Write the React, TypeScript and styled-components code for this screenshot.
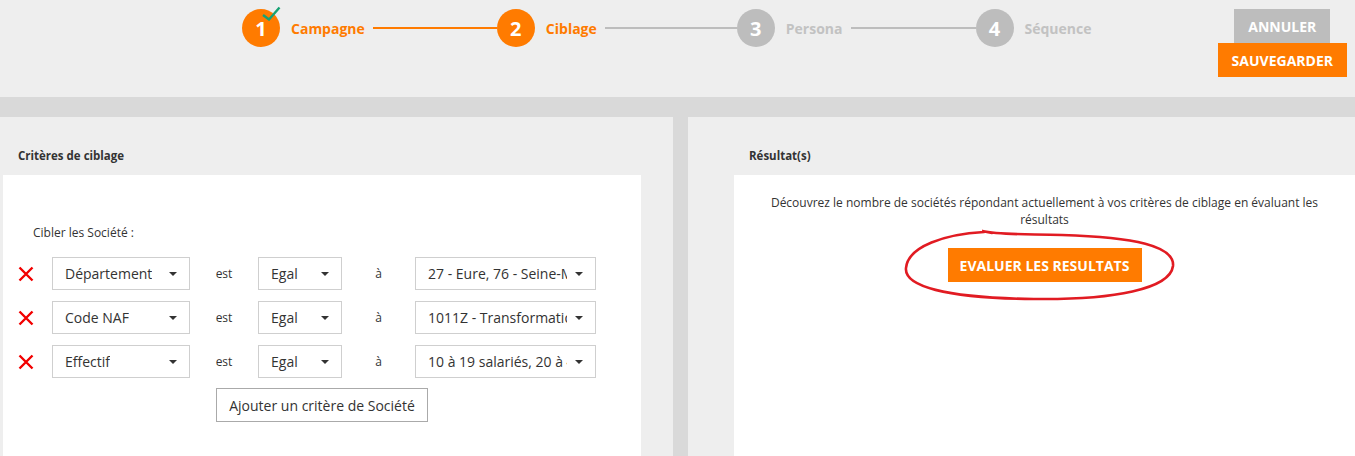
import React from 'react'
import styled, { createGlobalStyle } from 'styled-components'

const ORANGE = '#ff7b00'
const GREY = '#bdbdbd'

const GlobalStyle = createGlobalStyle`
  html, body {
    margin: 0;
    padding: 0;
    background: #eeeeee;
    font-family: "Open Sans", "Liberation Sans", sans-serif;
    color: #333;
  }
  * { box-sizing: border-box; }
`

const Page = styled.div`
  width: 1355px;
  height: 456px;
  overflow: hidden;
  background: #eeeeee;
  display: flex;
  flex-direction: column;
`

const Header = styled.div`
  height: 97px;
  display: flex;
  justify-content: space-between;
  align-items: flex-start;
  padding: 9px 8px 0 242px;
`

const Stepper = styled.div`
  display: flex;
  align-items: center;
`

const Circle = styled.div<{ $active: boolean }>`
  position: relative;
  width: 38px;
  height: 38px;
  border-radius: 50%;
  background: ${(p) => (p.$active ? ORANGE : GREY)};
  color: #fff;
  font-weight: 700;
  font-size: 20px;
  display: flex;
  align-items: center;
  justify-content: center;
  flex-shrink: 0;
`

const Check = styled.svg`
  position: absolute;
  left: 19px;
  top: -4px;
`

const StepLabel = styled.span<{ $active: boolean }>`
  margin-left: 11px;
  font-size: 14px;
  font-weight: 700;
  color: ${(p) => (p.$active ? ORANGE : '#c2c2c2')};
`

const Line = styled.div<{ $active: boolean; $w: number }>`
  width: ${(p) => p.$w}px;
  height: 2px;
  margin-left: 8px;
  background: ${(p) => (p.$active ? ORANGE : GREY)};
`

const Actions = styled.div`
  display: flex;
  flex-direction: column;
  align-items: center;
`

const ActionButton = styled.button<{ $primary?: boolean }>`
  height: 34px;
  border: none;
  padding: 0 14px;
  background: ${(p) => (p.$primary ? ORANGE : GREY)};
  color: #fff;
  font-family: inherit;
  font-size: 14px;
  font-weight: 700;
  text-transform: uppercase;
`

const Band = styled.div`
  height: 20px;
  background: #d9d9d9;
`

const Main = styled.div`
  flex: 1;
  display: flex;
  min-height: 0;
`

const LeftCol = styled.div`
  width: 673px;
  padding: 0 32px 0 3px;
  display: flex;
  flex-direction: column;
`

const Divider = styled.div`
  width: 15px;
  background: #d9d9d9;
`

const RightCol = styled.div`
  flex: 1;
  padding-left: 46px;
  display: flex;
  flex-direction: column;
`

const PanelTitle = styled.div`
  height: 58px;
  padding: 31px 0 0 15px;
  font-size: 11.5px;
  font-weight: 700;
  color: #333;
  line-height: 16px;
`

const WhiteBox = styled.div`
  flex: 1;
  background: #fff;
`

const CriteriaBox = styled(WhiteBox)`
  padding: 50px 0 0 15px;
`

const Intro = styled.div`
  padding-left: 15px;
  font-size: 12px;
  line-height: 16px;
  margin-bottom: 16px;
`

const Rows = styled.div`
  display: flex;
  flex-direction: column;
  gap: 11px;
`

const Row = styled.div`
  display: flex;
  align-items: center;
  height: 33px;
`

const Remove = styled.svg`
  flex-shrink: 0;
  margin-right: 18px;
`

const Select = styled.div<{ $w: number }>`
  position: relative;
  width: ${(p) => p.$w}px;
  height: 33px;
  border: 1px solid #cfcfcf;
  background: #fff;
  padding: 0 28px 0 12px;
  display: flex;
  align-items: center;
  font-size: 14px;
  color: #333;
  white-space: nowrap;
  overflow: hidden;
  &::after {
    content: '';
    position: absolute;
    right: 12px;
    top: 14px;
    border-left: 4px solid transparent;
    border-right: 4px solid transparent;
    border-top: 4px solid #333;
  }
`

const SelectText = styled.span`
  overflow: hidden;
  display: block;
`

const Word = styled.span<{ $w: number }>`
  width: ${(p) => p.$w}px;
  text-align: center;
  font-size: 12px;
  color: #333;
`

const AddRow = styled.div`
  display: flex;
  justify-content: center;
  padding-right: 15px;
  margin-top: 10px;
`

const AddButton = styled.button`
  height: 34px;
  padding: 0 12px;
  border: 1px solid #aaa;
  background: #fff;
  font-family: inherit;
  font-size: 14px;
  color: #333;
`

const ResultBox = styled(WhiteBox)`
  padding: 19px 26px 0;
  display: flex;
  flex-direction: column;
  align-items: center;
`

const ResultText = styled.p`
  margin: 0;
  font-size: 12px;
  line-height: 17px;
  text-align: center;
`

const EvalWrap = styled.div`
  position: relative;
  margin-top: 20px;
`

const EvalButton = styled(ActionButton)`
  width: 194px;
  padding: 0;
`

const Circled = styled.svg`
  position: absolute;
  left: -46px;
  top: -22px;
  pointer-events: none;
`

const steps = [
  { n: 1, label: 'Campagne', active: true, done: true, line: 124, lineActive: true },
  { n: 2, label: 'Ciblage', active: true, done: false, line: 132, lineActive: false },
  { n: 3, label: 'Persona', active: false, done: false, line: 125, lineActive: false },
  { n: 4, label: 'Séquence', active: false, done: false, line: 0, lineActive: false },
]

const criteria = [
  { field: 'Département', value: '27 - Eure, 76 - Seine-Maritime' },
  { field: 'Code NAF', value: '1011Z - Transformation et conservation' },
  { field: 'Effectif', value: '10 à 19 salariés, 20 à 49 salariés' },
]

const Cross = () => (
  <Remove width="16" height="16" viewBox="0 0 16 16">
    <path d="M1.5 1.5 L14.5 14.5 M14.5 1.5 L1.5 14.5" stroke="#f20000" strokeWidth="2.4" />
  </Remove>
)

export default function App() {
  return (
    <Page>
      <GlobalStyle />
      <Header>
        <Stepper>
          {steps.map((s) => (
            <React.Fragment key={s.n}>
              <Circle $active={s.active}>
                {s.n}
                {s.done && (
                  <Check width="20" height="16" viewBox="0 0 20 16">
                    <path d="M2 10 L8 14.5 L18.5 2.5" fill="none" stroke="#17a274" strokeWidth="2.4" />
                  </Check>
                )}
              </Circle>
              <StepLabel $active={s.active}>{s.label}</StepLabel>
              {s.line > 0 && <Line $active={s.lineActive} $w={s.line} />}
            </React.Fragment>
          ))}
        </Stepper>
        <Actions>
          <ActionButton>Annuler</ActionButton>
          <ActionButton $primary>Sauvegarder</ActionButton>
        </Actions>
      </Header>
      <Band />
      <Main>
        <LeftCol>
          <PanelTitle>Critères de ciblage</PanelTitle>
          <CriteriaBox>
            <Intro>Cibler les Société :</Intro>
            <Rows>
              {criteria.map((c) => (
                <Row key={c.field}>
                  <Cross />
                  <Select $w={138}>
                    <SelectText>{c.field}</SelectText>
                  </Select>
                  <Word $w={68}>est</Word>
                  <Select $w={84}>
                    <SelectText>Egal</SelectText>
                  </Select>
                  <Word $w={73}>à</Word>
                  <Select $w={181}>
                    <SelectText>{c.value}</SelectText>
                  </Select>
                </Row>
              ))}
            </Rows>
            <AddRow>
              <AddButton>Ajouter un critère de Société</AddButton>
            </AddRow>
          </CriteriaBox>
        </LeftCol>
        <Divider />
        <RightCol>
          <PanelTitle>Résultat(s)</PanelTitle>
          <ResultBox>
            <ResultText>
              Découvrez le nombre de sociétés répondant actuellement à vos critères de ciblage en évaluant les résultats
            </ResultText>
            <EvalWrap>
              <EvalButton $primary>Evaluer les resultats</EvalButton>
              <Circled width="276" height="78" viewBox="0 0 276 78">
                <path
                  d="M82 6 C44 8, 6 20, 4 42 C2 60, 42 72, 132 73 C212 74, 268 63, 271 40 C273 20, 232 11, 160 9 C122 8, 98 9, 80 5 L90 7"
                  fill="none"
                  stroke="#e11b22"
                  strokeWidth="2.6"
                  strokeLinecap="round"
                />
              </Circled>
            </EvalWrap>
          </ResultBox>
        </RightCol>
      </Main>
    </Page>
  )
}
